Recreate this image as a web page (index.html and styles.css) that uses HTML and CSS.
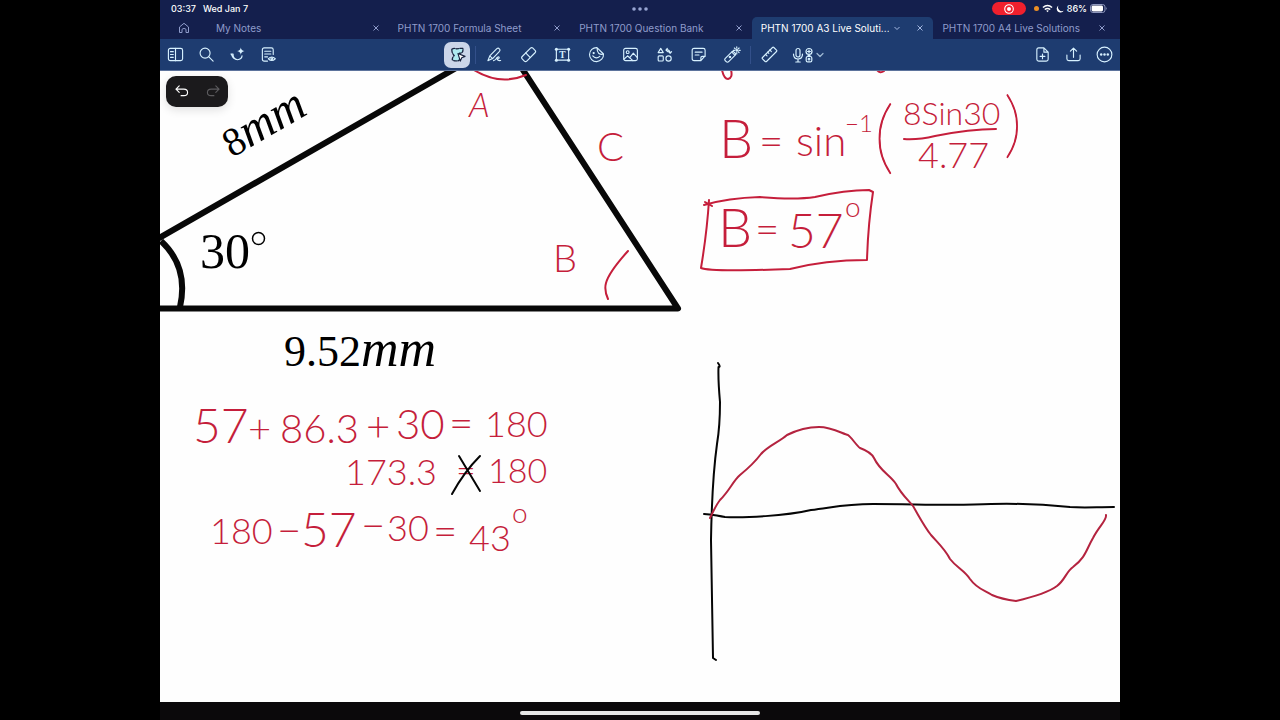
FILE: index.html
```html
<!DOCTYPE html>
<html lang="en">
<head>
<meta charset="utf-8">
<meta name="viewport" content="width=device-width, initial-scale=1">
<title>PHTN 1700 A3 Live Solutions</title>
<link rel="stylesheet" href="styles.css">
</head>
<body>
<main class="app">
  <header class="top">
    <div class="status">
      <div class="status-left"><span>03:37</span><span>Wed Jan 7</span></div>
      <svg class="dots" viewBox="0 0 16 4" role="img" aria-label="Multitasking"><circle cx="2" cy="2" r="1.8"/><circle cx="8" cy="2" r="1.8"/><circle cx="14" cy="2" r="1.8"/></svg>
      <div class="status-right">
        <span class="record"><svg viewBox="0 0 12 12"><circle cx="6" cy="6" r="4.3" fill="none" stroke="#fff" stroke-width="1.1"/><circle cx="6" cy="6" r="2" fill="#fff"/></svg></span>
        <span class="mic-dot"></span>
        <svg class="wifi" viewBox="0 0 12 9"><g fill="none" stroke="#fff" stroke-width="1.6"><path d="M1 3.4Q6-.9 11 3.4"/><path d="M3 5.6Q6 3.2 9 5.6"/></g><path d="M4.6 7Q6 5.9 7.4 7L6 8.6Z" fill="#fff"/></svg>
        <svg class="moon" viewBox="0 0 8 8"><path d="M2.500 .5A3.800 3.800 0 1 0 7.700 5.800A3.900 3.900 0 0 1 2.500 .5Z" fill="#fff"/></svg>
        <span>86%</span>
        <svg class="battery" viewBox="0 0 18 9"><rect x=".5" y=".5" width="14.5" height="8" rx="2.4" fill="none" stroke="#8d97bd"/><rect x="1.6" y="1.6" width="11.4" height="5.8" rx="1.4" fill="#fff"/><path d="M16.300 3v3Q17.800 4.500 16.300 3" fill="#8d97bd"/></svg>
      </div>
    </div>
    <nav class="tabs" aria-label="Open notes">
      <button class="home" aria-label="Home"><svg viewBox="0 0 12 12"><path d="M1.500 5L6 1.300 10.500 5V10.500H8V7.800Q8 6.500 6 6.500T4 7.800V10.500H1.500Z"/></svg></button>
      <div class="tab"><button class="name">My Notes</button><button class="close" aria-label="Close My Notes"><svg viewBox="0 0 6 6"><path d="M.5.5L5.500 5.500M5.500.5L.5 5.500"/></svg></button></div>
      <div class="tab"><button class="name">PHTN 1700 Formula Sheet</button><button class="close" aria-label="Close Formula Sheet"><svg viewBox="0 0 6 6"><path d="M.5.5L5.500 5.500M5.500.5L.5 5.500"/></svg></button></div>
      <div class="tab"><button class="name">PHTN 1700 Question Bank</button><button class="close" aria-label="Close Question Bank"><svg viewBox="0 0 6 6"><path d="M.5.5L5.500 5.500M5.500.5L.5 5.500"/></svg></button></div>
      <div class="tab active"><button class="name">PHTN 1700 A3 Live Soluti...</button><button class="close" aria-label="Tab options"><svg viewBox="0 0 6 6"><path d="M.5 2L3 4.500 5.500 2"/></svg></button><button class="close" aria-label="Close A3 Live Solutions"><svg viewBox="0 0 6 6"><path d="M.5.5L5.500 5.500M5.500.5L.5 5.500"/></svg></button></div>
      <div class="tab"><button class="name">PHTN 1700 A4 Live Solutions</button><button class="close" aria-label="Close A4 Live Solutions"><svg viewBox="0 0 6 6"><path d="M.5.5L5.500 5.500M5.500.5L.5 5.500"/></svg></button></div>
    </nav>
    <div class="toolbar" role="toolbar" aria-label="Tools">
      <div class="group left">
        <button aria-label="Sidebar"><svg viewBox="0 0 18 18"><rect x="1.500" y="2.500" width="15" height="13" rx="2"/><path d="M9 2.500v13M3.700 6h3M3.700 9h3M3.700 12h3"/></svg></button>
        <button aria-label="Search"><svg viewBox="0 0 18 18"><circle cx="7.500" cy="7.500" r="5.300"/><path d="M11.500 11.500L16 16"/></svg></button>
        <button aria-label="Assistant"><svg viewBox="0 0 18 18"><path d="M2 8.500H4.300Q4 14 9 14.500Q13.500 14 13.800 10.500M2.500 8.500Q4 13 6 13.500"/><path d="M12.500 1.500Q13 4.800 16.500 5.400Q13 6 12.500 9.300Q12 6 8.500 5.400Q12 4.800 12.500 1.500Z" fill="currentColor" stroke="none"/></svg></button>
        <button aria-label="Document view"><svg viewBox="0 0 18 18"><path d="M8 16H4.500Q2.500 16 2.500 14V4Q2.500 2 4.500 2H12Q14 2 14 4V9M5 5.500h6.500M5 8.500h6.500M5 11.500h3"/><path d="M8.800 13.500Q12.500 9.800 16.200 13.500Q12.500 17.200 8.800 13.500Z"/><circle cx="12.500" cy="13.500" r=".9"/></svg></button>
      </div>
      <div class="group center">
        <button class="lasso" aria-label="Lasso" aria-pressed="true"><svg viewBox="0 0 18 18"><path d="M3 3.500Q5 2 8 3Q11 2.500 15 2.500L14.500 6Q13 8 11 7.500L13 13L10 15.500Q6 16.500 3.500 14.500Q3.500 12 5.500 10Q3 8 3 3.500Z" fill="#aeeaf0" stroke="#18233f" stroke-width="1.400" stroke-dasharray="3 1.500"/><path d="M9.500 8L17 11L13.500 12.500L12 16Z" fill="#fff" stroke="#18233f"/></svg></button>
        <span class="rule"></span>
        <button aria-label="Pen"><svg viewBox="0 0 18 18"><path d="M2 15.500L4 10.500L11.500 2.800Q13 1.700 14.200 3Q15.500 4.200 14.300 5.600L7 13.300ZM4 10.500L7 13.300M8 15.500Q10 15.500 11.500 12.500Q14 10.500 14 12.500Q13.500 14 11.800 13.500Q12 16 15.500 15.300"/></svg></button>
        <button aria-label="Eraser"><svg viewBox="0 0 18 18"><rect x="1" y="5.800" width="16" height="6.800" rx="1.800" transform="rotate(-45 9 9)"/><path d="M6 7.300L10.700 12"/></svg></button>
        <button aria-label="Text"><svg viewBox="0 0 18 18"><rect x="2.500" y="3.500" width="13" height="11.500"/><g fill="currentColor" stroke="none"><circle cx="2.500" cy="3.500" r="1.600"/><circle cx="15.500" cy="3.500" r="1.600"/><circle cx="2.500" cy="15" r="1.600"/><circle cx="15.500" cy="15" r="1.600"/></g><text class="tool-letter" x="9" y="13" text-anchor="middle">T</text></svg></button>
        <button aria-label="Stickers"><svg viewBox="0 0 18 18"><path d="M9.500 1.700A7.400 7.400 0 1 0 16.400 8.500Q14 9.500 11.500 8Q9.500 6 9.500 1.700L16.400 8.500M5 10.500Q8.500 14.500 12.500 11"/><circle cx="6" cy="7.500" r=".6" fill="currentColor"/></svg></button>
        <button aria-label="Image"><svg viewBox="0 0 18 18"><rect x="1.800" y="2.500" width="14.500" height="13" rx="2"/><circle cx="6" cy="6.500" r="1.500"/><path d="M2 14L6 10.500L8 12.500L12 7.500L16 12M6 10.500L11.500 15.500"/></svg></button>
        <button aria-label="Shapes"><svg viewBox="0 0 18 18"><path d="M5 2.500L7.700 7H2.300ZM11 4.300Q14.500 3.500 15 7.500M13.200 6L15 7.700L16.500 6M12 2.500L10.500 4.300L12.300 6"/><rect x="2.300" y="10.500" width="5.400" height="5.400" rx="1"/><circle cx="13.300" cy="13.200" r="2.800"/></svg></button>
        <button aria-label="Sticky note"><svg viewBox="0 0 18 18"><path d="M4.300 2.500H14Q16 2.500 16 4.500V10.500L11.500 15.500H4.300Q2.300 15.500 2.300 13.500V4.500Q2.300 2.500 4.300 2.500ZM11.500 15.500V12.500Q11.500 11 13 11H16M5.500 6.500h7.300M5.500 9.500h4"/></svg></button>
        <button aria-label="Laser pointer"><svg viewBox="0 0 18 18"><rect x="0" y="9" width="13" height="5" rx="1.800" transform="rotate(-45 6.500 11.500)"/><circle cx="6.300" cy="11.700" r=".8"/><path d="M8.300 6.500L11.500 9.700M13.500 .8V2.300M13.500 6.900V8.400M9.800 4.600H11.300M15.700 4.600H17.200M11 2.100L12 3.100M15 6.100L16 7.100M16 2.100L15 3.100"/><circle cx="13.500" cy="4.600" r=".9" fill="currentColor"/></svg></button>
        <span class="rule"></span>
        <button aria-label="Ruler"><svg viewBox="0 0 18 18"><rect x=".5" y="6" width="17" height="6" rx="1" transform="rotate(-45 9 9)"/><path d="M4.700 8.800L6.400 10.500M7 6.500L8.300 7.800M9.300 4.200L11 5.900"/></svg></button>
        <button class="wide" aria-label="Audio recording"><svg viewBox="0 0 32 18"><rect x="4" y="2.500" width="4" height="8.500" rx="2"/><path d="M1.500 8Q1.500 13 6 13T10.500 8M6 13V16M3.800 16H8.200"/><circle cx="17" cy="5.500" r="3"/><path d="M17 4v3M15.500 5.500h3M16 9.500h2"/><rect x="14.200" y="10.500" width="5.600" height="5.400" rx="1.500"/><circle cx="17" cy="13.200" r=".8"/><path class="faint" d="M25 7.500L28 10.500L31 7.500"/></svg></button>
      </div>
      <div class="group right">
        <button aria-label="Add page"><svg viewBox="0 0 18 18"><path d="M10.500 2H5Q3 2 3 4V14Q3 16 5 16H13Q15 16 15 14V6.500ZM10.500 2V6.500H15M9 8.500v5M6.500 11h5"/></svg></button>
        <button aria-label="Share"><svg viewBox="0 0 18 18"><path d="M2 9.500V13.500Q2 15.500 4 15.500H14Q16 15.500 16 13.500V9.500M9 12V2.500M5.700 5.500L9 2.200L12.300 5.500"/></svg></button>
        <button aria-label="More"><svg viewBox="0 0 18 18"><circle cx="9" cy="9" r="7.800"/><g fill="currentColor" stroke="none"><circle cx="5.500" cy="9" r="1.300"/><circle cx="9" cy="9" r="1.300"/><circle cx="12.500" cy="9" r="1.300"/></g></svg></button>
      </div>
    </div>
  </header>

  <section class="page" aria-label="Note page">
    <svg class="canvas" viewBox="160 71 960 631" preserveAspectRatio="xMidYMin slice">
      <!-- printed triangle -->
      <g class="print-line">
        <path d="M154 241L470 60M510 50L678 308.500H150"/>
        <path d="M161 241Q189 267 180 307"/>
      </g>
      <g class="print">
        <text x="200" y="268">30</text>
        <circle class="degree" cx="258.500" cy="238.500" r="6"/>
        <text class="p44" x="284" y="366">9.52</text><text class="unit" x="361" y="366">mm</text>
        <g transform="translate(232 158) rotate(-30)"><text class="p40" x="0" y="0">8</text><text class="p48 it" x="20" y="0">mm</text></g>
      </g>

      <!-- angle marks -->
      <g class="ink">
        <path d="M474 70Q500 86 526 75"/>
        <path d="M628 251Q609 272 606 283Q604 290 608 299"/>
        <path d="M722 70Q724 79 728 79Q733 78 731 70M877 70Q880 74 884 71"/>
      </g>
      <!-- angle B -->
      <g class="ink">
        <path d="M904 139Q918 140 935 136Q970 129 996 129"/>
        <path d="M709 200Q707 232 701 268Q710 272 790 269Q825 260 867 260Q868 225 873 192L869 190Q845 190 815 197Q795 200 760 197Q728 198 704 205M705 202L712 206"/>
      </g>
      <g class="hand">
        <text class="h34 slant" x="469" y="117">A</text>
        <text class="h40" x="597" y="161">C</text>
        <text class="h38" x="553" y="272">B</text>
        <text class="h54" x="719" y="158">B</text><text class="h42" x="759" y="156">=</text>
        <text class="h42" x="796" y="156">sin</text>
        <text class="h24" x="845" y="132">−1</text>
        <text class="h80 thin" x="874" y="164">(</text>
        <text class="h32" x="903" y="125">8Sin30</text>
        <text class="h36" x="918" y="168">4.77</text>
        <text class="h72 thin" x="1004" y="149">)</text>
        <text class="h54" x="718" y="247">B</text><text class="h42" x="755" y="244">=</text>
        <text class="h48" x="788" y="248">57</text><text class="h28" x="845" y="217">o</text>
      </g>

      <!-- angle sum working -->
      <g class="hand">
        <text class="h48" x="193" y="443">57</text><text class="h40" x="248" y="443">+</text><text class="h40" x="280" y="443">86.3</text><text class="h42" x="366" y="441">+</text><text class="h42" x="396" y="439">30</text><text class="h42" x="449" y="438">=</text><text class="h36" x="485" y="437">180</text>
        <text class="h36" x="345" y="485">173.3</text><text class="h34" x="456" y="482">=</text><text class="h34" x="488" y="483">180</text>
        <text class="h36" x="210" y="544">180</text><text class="h42" x="277" y="545">−</text><text class="h48" x="301" y="547">57</text><text class="h42" x="361" y="540">−</text><text class="h36" x="387" y="541">30</text><text class="h42" x="433" y="546">=</text><text class="h36" x="469" y="551">43</text><text class="h28" x="512" y="523">o</text>
      </g>
      <path class="ink dark" d="M459 456L480 491M480 456Q464 472 452 494"/>

      <!-- sine sketch -->
      <path class="ink dark" d="M718 363Q721 367 718.500 367Q718 380 720 402Q720 426 717 444Q712 480 711 540Q712 600 713 658L716 660M704 514C712 514 717 516 725 517C744 518 785 516 811 510C835 507 845 504 873 504C915 504 955 506 991 504C1030 503 1050 505 1070 507C1085 508 1096 507 1114 507"/>
      <path class="ink curve" d="M710 518C713 512 716 505 720 500C730 490 733 481 740 475C751 466 755 462 761 454C768 446 779 442 787 435C797 430 808 427 819 427C832 427 843 434 848 435C852 438 856 445 860 448C868 451 872 454 874 458C880 471 890 475 896 484C901 494 909 501 913 506C920 518 924 526 931 535C938 543 945 549 950 559C957 568 964 570 970 579C977 589 984 590 992 595C999 598 1008 600 1016 601C1029 598 1046 594 1057 586C1065 580 1066 572 1073 567C1086 557 1086 550 1093 538C1099 526 1107 520 1106 515"/>
    </svg>
    <div class="history">
      <button aria-label="Undo"><svg viewBox="0 0 16 14"><path d="M5 1L1.500 4.500L5 8M1.500 4.500H10Q14 4.500 14 8T10 11.500H7"/></svg></button>
      <button aria-label="Redo" disabled><svg viewBox="0 0 16 14"><path d="M11 1L14.500 4.500L11 8M14.500 4.500H6Q2 4.500 2 8T6 11.500H9"/></svg></button>
    </div>
  </section>
  <footer class="foot"><span class="indicator"></span></footer>
</main>
</body>
</html>
```
FILE: styles.css
```css
* { box-sizing: border-box; }
body { margin: 0; background: #000; font-family: Inter, "Liberation Sans", sans-serif; }
button { margin: 0; padding: 0; border: 0; background: none; color: inherit; font: inherit; display: flex; align-items: center; justify-content: center; }
.app { width: 75%; min-height: 100vh; margin: 0 auto; display: flex; flex-direction: column; }
.top { background: #141f4d; color: #fff; }

.status { height: 17px; padding: 0 12px 0 11px; display: grid; grid-template-columns: 1fr auto 1fr; align-items: center; font-size: 9px; font-weight: 500; line-height: 17px; }
.status-left { display: flex; gap: 7px; }
.dots { width: 16px; height: 4px; fill: #98a5d3; }
.status-right { display: flex; justify-content: flex-end; align-items: center; gap: 3px; }
.record { width: 34px; height: 13px; margin-right: 5px; border-radius: 7px; background: #f0202d; display: flex; align-items: center; justify-content: center; }
.record svg { width: 12px; height: 12px; }
.mic-dot { width: 5px; height: 5px; border-radius: 50%; background: #ec8f25; }
.wifi { width: 11px; height: 9px; }
.moon { width: 8px; height: 8px; }
.battery { width: 18px; height: 9px; }

.tabs { height: 22px; padding-right: 5px; display: flex; color: #8f9ccb; font-size: 10px; }
.home { width: 47px; }
.home svg { width: 12px; height: 12px; fill: none; stroke: currentColor; }
.tab { flex: 1 1 0; min-width: 0; display: flex; align-items: center; padding: 0 5px 0 9px; }
.name { flex: 1; min-width: 0; display: block; overflow: hidden; text-align: left; white-space: nowrap; line-height: 22px; }
.close { width: 16px; height: 22px; flex: none; }
.close + .close { margin-left: 7px; }
.close svg { width: 6px; height: 6px; fill: none; stroke: currentColor; stroke-width: 1; }
.active { background: #1e3c70; color: #fff; border-radius: 5px 5px 0 0; }
.active .close { color: #a3b7e0; }

.toolbar { height: 32px; background: #1e3c70; border-bottom: 1px solid #5d739c; color: #d7f1ff; display: grid; grid-template-columns: 1fr auto 1fr; align-items: center; }
.group { display: flex; align-items: center; }
.toolbar button { width: 34px; height: 26px; }
.toolbar svg { width: 17px; height: 17px; fill: none; stroke: currentColor; stroke-width: 1.2; stroke-linecap: round; stroke-linejoin: round; }
.left button, .right button { width: 31px; }
.center { padding-right: 6px; }
.right { justify-content: flex-end; }
.toolbar .lasso { width: 26px; border-radius: 7px; background: #cbd6e9; }
.toolbar .wide { width: 44px; }
.toolbar .wide svg { width: 34px; height: 18px; }
.faint { opacity: .7; }
.tool-letter { font: 700 10px "Liberation Serif", serif; fill: currentColor; stroke: none; }
.rule { width: 1px; height: 18px; margin: 0 1px; background: #33508a; }
.lasso + .rule { margin-left: 5px; }

.page { flex: 1; position: relative; overflow: hidden; background: #fefefe; display: flex; }
.canvas { width: 100%; display: block; }
.history { position: absolute; left: 6px; top: 5px; width: 62px; height: 31px; border-radius: 10px; background: #1b1a1c; color: #fff; display: flex; box-shadow: 0 3px 10px rgba(0, 0, 0, .12); }
.history button { flex: 1; }
.history svg { width: 16px; height: 13px; fill: none; stroke: currentColor; stroke-width: 1.2; stroke-linecap: round; stroke-linejoin: round; }
.history button:disabled { color: #5c5b5e; }

.print-line { fill: none; stroke: #080808; stroke-width: 6; stroke-linejoin: round; }
.print { font-family: "Liberation Serif", serif; font-size: 50px; fill: #000; }
.degree { fill: none; stroke: #000; stroke-width: 1.5; }
.p40 { font-size: 40px; }
.p44 { font-size: 44px; }
.p48 { font-size: 48px; }
.unit { font-size: 52px; font-style: italic; }
.it, .slant { font-style: italic; }
.ink { fill: none; stroke: #c51e3b; stroke-width: 2; stroke-linecap: round; stroke-linejoin: round; }
.ink.dark { stroke: #050505; }
.ink.curve { stroke: #b4233f; }
.hand { font-family: Lato, "Liberation Sans", sans-serif; font-weight: 300; fill: #c51e3b; }
.thin { font-weight: 100; stroke: #c51e3b; stroke-width: 1; }
.h24 { font-size: 24px; }
.h28 { font-size: 28px; }
.h32 { font-size: 32px; }
.h34 { font-size: 34px; }
.h36 { font-size: 36px; }
.h38 { font-size: 38px; }
.h40 { font-size: 40px; }
.h42 { font-size: 42px; }
.h48 { font-size: 48px; }
.h54 { font-size: 54px; }
.h72 { font-size: 72px; }
.h80 { font-size: 80px; }

.foot { height: 18px; background: #0b090b; display: flex; justify-content: center; align-items: center; padding-top: 4px; }
.indicator { width: 25%; height: 4px; border-radius: 2px; background: #e6e6e6; }
```
